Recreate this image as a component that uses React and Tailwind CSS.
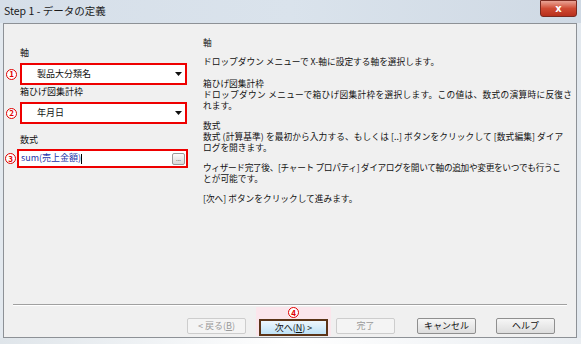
import React from 'react';

const jp = { fontFamily: '"Noto Sans CJK JP", "Noto Sans", sans-serif' };

function Num({ n, className = '' }) {
  return (
    <span className={`flex items-center justify-center w-[11px] h-[11px] rounded-full border-[1.5px] border-[#e00000] bg-white text-[#e00000] text-[8px] font-bold leading-none ${className}`}>
      {n}
    </span>
  );
}

function Dropdown({ value }) {
  return (
    <div className="flex items-center justify-between w-[167px] h-[22px] border-2 border-[#ee0000] bg-white pl-[15px] pr-[3px]">
      <span className="text-[9px] text-[#111]">{value}</span>
      <svg width="7" height="4" viewBox="0 0 7 4"><path d="M0 0h7L3.5 4z" fill="#111" /></svg>
    </div>
  );
}

function Btn({ children, disabled, primary }) {
  if (primary) {
    return (
      <div className="flex items-center justify-center w-[69px] h-[17px] border-2 border-[#5b3417] bg-gradient-to-b from-[#eef7fd] to-[#bfe2f6] text-[9px] text-[#111]">
        {children}
      </div>
    );
  }
  return (
    <div className={`flex items-center justify-center w-[59px] h-[16px] rounded-[2px] border text-[9px] ${disabled ? 'border-[#cdcdcd] bg-[#f4f4f4] text-[#9a9a9a]' : 'border-[#8f8f8f] bg-gradient-to-b from-[#f6f6f6] to-[#dddddd] text-[#111]'}`}>
      {children}
    </div>
  );
}

export default function App() {
  return (
    <div className="w-[581px] h-[344px] overflow-hidden bg-[#e3e9ef] flex flex-col" style={jp}>
      {/* Title bar */}
      <div className="h-[23px] flex justify-between items-start bg-gradient-to-r from-[#d6dfe9] via-[#dae3ec] to-[#cfd9e4]">
        <span className="pl-[4px] pt-[4px] text-[10.5px] text-[#1a1a1a] leading-[14px]">Step 1 - データの定義</span>
        <div className="mr-[4px] w-[37px] h-[17px] rounded-b-[3px] border border-[#7a2a20] bg-gradient-to-b from-[#e8a294] via-[#cf4a33] to-[#b8301d] flex items-center justify-center">
          <span className="text-white text-[10px] font-bold leading-none" style={{ fontFamily: '"DejaVu Sans", sans-serif' }}>x</span>
        </div>
      </div>

      <div className="flex-1 flex px-[3px]">
        <div className="w-[574px] h-[315px] border border-[#8d9196] bg-[#f0f0f0] flex flex-col">
          <div className="flex-1 flex">
            {/* Left column */}
            <div className="w-[199px] pt-[23px] flex flex-col">
              <div className="pl-[16px] text-[9px] leading-[12px] text-[#111]">軸</div>
              <div className="flex items-center mt-[4px] pl-[2px] gap-[3px]">
                <Num n="1" />
                <Dropdown value="製品大分類名" />
              </div>
              <div className="pl-[16px] mt-[1px] text-[9px] leading-[12px] text-[#111]">箱ひげ図集計枠</div>
              <div className="flex items-center mt-[4px] pl-[2px] gap-[3px]">
                <Num n="2" />
                <Dropdown value="年月日" />
              </div>
              <div className="pl-[16px] mt-[10px] text-[9px] leading-[12px] text-[#111]">数式</div>
              <div className="flex items-center mt-[3px] pl-[1px] gap-[1px]">
                <Num n="3" />
                <div className="flex items-center justify-between w-[171px] h-[19px] border-2 border-[#ee0000] bg-white pl-[2px] pr-[1px]">
                  <span className="text-[9px] leading-none text-[#2233aa]">sum(売上金額)<span className="inline-block w-px h-[10px] bg-black align-middle" /></span>
                  <div className="w-[13px] h-[12px] rounded-[2px] border border-[#9a9a9a] bg-gradient-to-b from-[#fbfbfb] to-[#d8d8d8] flex items-end justify-center pb-[2px]">
                    <span className="text-[6px] leading-none text-[#333]">...</span>
                  </div>
                </div>
              </div>
            </div>

            {/* Right column: help text */}
            <div className="pt-[13px] text-[8.7px] leading-[11px] text-[#111] whitespace-nowrap">
              <p className="mb-[8px]">軸</p>
              <p className="mb-[11px]">ドロップダウン メニューで X-軸に設定する軸を選択します。</p>
              <p className="mb-[9px]">箱ひげ図集計枠<br /><span className="tracking-[0.3px]">ドロップダウン メニューで箱ひげ図集計枠を選択します。この値は、数式の演算時に反復さ</span><br />れます。</p>
              <p className="mb-[9px]">数式<br /><span className="tracking-[0.1px]">数式 (計算基準) を最初から入力する、もしくは [..] ボタンをクリックして [数式編集] ダイア</span><br />ログを開きます。</p>
              <p className="mb-[9px]"><span className="tracking-[-0.35px]">ウィザード完了後、[チャート プロパティ] ダイアログを開いて軸の追加や変更をいつでも行うこ</span><br />とが可能です。</p>
              <p>[次へ] ボタンをクリックして進みます。</p>
            </div>
          </div>

          {/* Separator + buttons */}
          <div className="mx-[9px] h-[2px] border-t border-[#a0a0a0] border-b border-b-white" />
          <div className="h-[31px] flex items-start pl-[183px] pt-[1px]">
            <div className="mt-[11px]">
              <Btn disabled>&lt; 戻る(<span className="underline">B</span>)</Btn>
            </div>
            <div className="ml-[10px] w-[75px] h-[29px] bg-[#fbe6ec] flex flex-col items-center">
              <Num n="4" className="bg-[#fbe6ec] mb-[1px]" />
              <Btn primary>次へ(<span className="underline">N</span>) &gt;</Btn>
            </div>
            <div className="mt-[11px] ml-[5px]">
              <Btn disabled>完了</Btn>
            </div>
            <div className="mt-[11px] ml-[22px]">
              <Btn>キャンセル</Btn>
            </div>
            <div className="mt-[11px] ml-[20px]">
              <Btn>ヘルプ</Btn>
            </div>
          </div>
        </div>
      </div>
      <div className="h-[6px] bg-gradient-to-r from-[#dfe5ea] via-[#ffffff] to-[#e9edf1]" />
    </div>
  );
}
